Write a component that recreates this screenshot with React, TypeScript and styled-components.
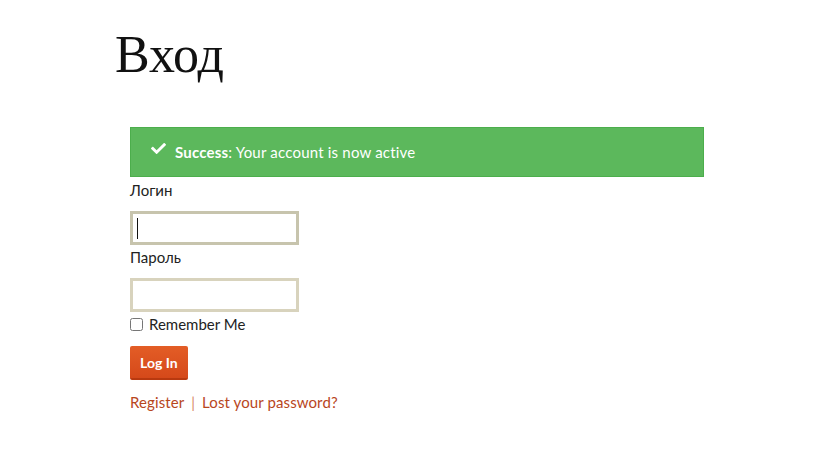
import React from 'react';
import styled, { createGlobalStyle } from 'styled-components';
import { FaCheck } from 'react-icons/fa';

const GlobalStyle = createGlobalStyle`
  html, body {
    margin: 0;
    padding: 0;
    background: #fff;
  }
  body {
    font-family: Lato, 'Noto Sans', sans-serif;
    color: #222;
  }
`;

const Page = styled.div`
  padding: 0 115px;
`;

const Title = styled.h1`
  margin: 26px 0 0;
  font-family: 'Liberation Serif', 'Times New Roman', serif;
  font-weight: normal;
  font-size: 52px;
  line-height: 57px;
  color: #111;
`;

const Form = styled.form`
  margin: 44px 0 0 15px;
  width: 574px;
`;

const Alert = styled.div`
  display: flex;
  align-items: flex-start;
  gap: 9px;
  padding: 12px 20px;
  background: #5cb85c;
  border: 1px solid #4cae4c;
  color: #fff;
  font-size: 15px;
  line-height: 24px;
  letter-spacing: 0.2px;
  margin-bottom: 1px;

  svg {
    margin-top: 1px;
    flex: none;
  }

  strong {
    font-weight: 700;
  }
`;

const Label = styled.label`
  display: block;
  font-size: 15px;
  line-height: 24px;
  color: #222;
`;

const Input = styled.input`
  display: block;
  box-sizing: border-box;
  margin-top: 9px;
  width: 169px;
  height: 34px;
  padding: 0 6px;
  border: 3px solid #d8d3bd;
  background: #fff;
  outline: none;
  font-family: Lato, sans-serif;
  font-size: 15px;
`;

const FocusedInput = styled.div`
  box-sizing: border-box;
  margin-top: 9px;
  width: 169px;
  height: 34px;
  padding: 3px 4px;
  border: 3px solid #c7c4ad;
  display: flex;
  align-items: center;
`;

const Caret = styled.span`
  display: block;
  width: 1px;
  height: 21px;
  background: #111;
`;

const CheckRow = styled.label`
  display: flex;
  align-items: center;
  font-size: 15px;
  line-height: 24px;
  color: #222;

  input {
    margin: 0 6px 0 0;
    width: 13px;
    height: 13px;
  }
`;

const SubmitButton = styled.button`
  margin-top: 10px;
  height: 34px;
  padding: 0 10px;
  border: none;
  border-bottom: 2px solid #b8390f;
  border-radius: 2px;
  background: linear-gradient(#e35d26, #d5491a);
  color: #fff;
  font-family: Lato, sans-serif;
  font-weight: 700;
  font-size: 14px;
  cursor: pointer;
`;

const Links = styled.p`
  margin: 10px 0 0;
  font-size: 15px;
  line-height: 24px;
  letter-spacing: 0.1px;
  color: #b8461d;

  a {
    color: #b8461d;
    text-decoration: none;
  }
`;

const Sep = styled.span`
  color: #d9886a;
  margin: 0 7px;
`;

const App: React.FC = () => {
  return (
    <Page>
      <GlobalStyle />
      <Title>Вход</Title>
      <Form onSubmit={(e) => e.preventDefault()}>
        <Alert>
          <FaCheck size={15} />
          <span>
            <strong>Success</strong>: Your account is now active
          </span>
        </Alert>
        <Label>Логин</Label>
        <FocusedInput>
          <Caret />
        </FocusedInput>
        <Label>Пароль</Label>
        <Input type="password" />
        <CheckRow>
          <input type="checkbox" />
          Remember Me
        </CheckRow>
        <SubmitButton type="submit">Log In</SubmitButton>
        <Links>
          <a href="#">Register</a>
          <Sep>|</Sep>
          <a href="#">Lost your password?</a>
        </Links>
      </Form>
    </Page>
  );
};

export default App;
